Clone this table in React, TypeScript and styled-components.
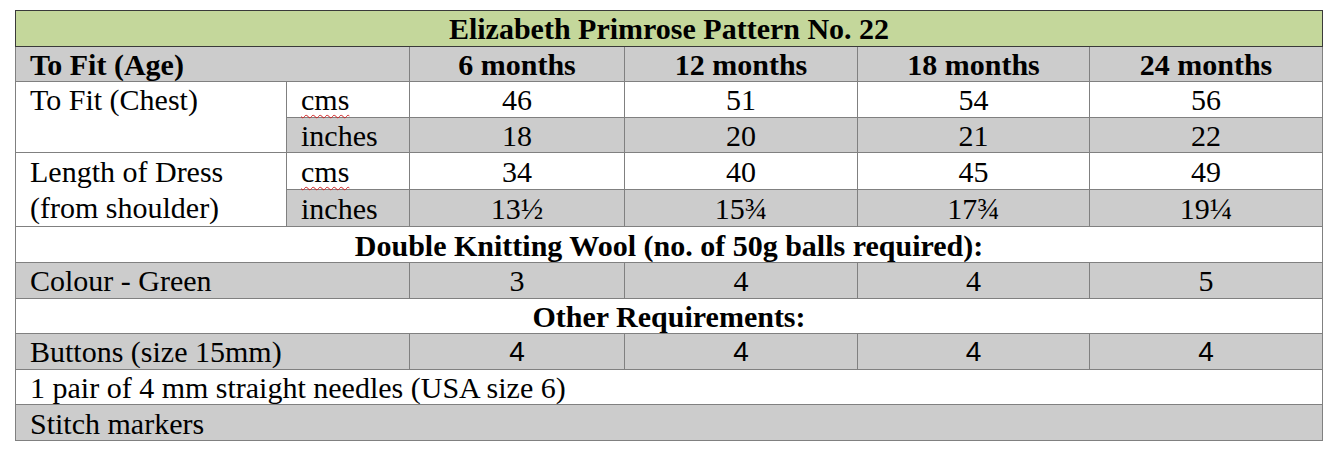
import React from 'react'
import styled, { createGlobalStyle } from 'styled-components'

const serif = "'Liberation Serif', 'Times New Roman', serif"
const sans = "'Liberation Sans', Arial, sans-serif"

const GlobalStyle = createGlobalStyle`
  html, body {
    margin: 0;
    padding: 0;
    background: #ffffff;
  }
  body {
    padding: 10px 0 0 15px;
  }
`

const Table = styled.table`
  width: 1307px;
  table-layout: fixed;
  border-collapse: collapse;
  color: #000;
`

const Row = styled.tr<{ $shade?: 'green' | 'grey' | 'white' }>`
  height: 35.6px;
  background: ${({ $shade }) =>
    $shade === 'green' ? '#c4d79b' : $shade === 'grey' ? '#cccccc' : '#ffffff'};
`

const Cell = styled.td<{ $align?: 'left' | 'center'; $bold?: boolean; $top?: boolean; $sans?: boolean }>`
  border: 1px solid #808080;
  padding: 1px 14px 0 14px;
  line-height: 33px;
  text-align: ${({ $align }) => $align ?? 'center'};
  font-weight: ${({ $bold }) => ($bold ? 700 : 400)};
  vertical-align: ${({ $top }) => ($top ? 'top' : 'middle')};
  white-space: nowrap;
  font-family: ${({ $sans }) => ($sans ? sans : serif)};
  font-size: ${({ $sans }) => ($sans ? '28px' : '30px')};
`

const TitleCell = styled(Cell)`
  border: 1px solid #3a3a3a;
`

const Wrap = styled(Cell)`
  white-space: normal;
  line-height: 36px;
`

const Spelled = styled.span`
  text-decoration: underline wavy #d02020;
  text-decoration-thickness: 1px;
  text-underline-offset: 4px;
`

const widths = [271, 123, 215, 233, 232, 233]
const ages = ['6 months', '12 months', '18 months', '24 months']

const Values: React.FC<{ items: string[]; sans?: boolean }> = ({ items, sans }) => (
  <>
    {items.map((v, i) => (
      <Cell key={i} $sans={sans}>
        {v}
      </Cell>
    ))}
  </>
)

export default function App() {
  return (
    <>
      <GlobalStyle />
      <Table>
        <colgroup>
          {widths.map((w, i) => (
            <col key={i} style={{ width: w }} />
          ))}
        </colgroup>
        <tbody>
          <Row $shade="green">
            <TitleCell colSpan={6} $bold>
              Elizabeth Primrose Pattern No. 22
            </TitleCell>
          </Row>
          <Row $shade="grey">
            <Cell colSpan={2} $align="left" $bold>
              To Fit (Age)
            </Cell>
            {ages.map((a) => (
              <Cell key={a} $bold>
                {a}
              </Cell>
            ))}
          </Row>
          <Row>
            <Cell rowSpan={2} $align="left" $top style={{ background: '#fff' }}>
              To Fit (Chest)
            </Cell>
            <Cell $align="left">
              <Spelled>cms</Spelled>
            </Cell>
            <Values items={['46', '51', '54', '56']} />
          </Row>
          <Row $shade="grey">
            <Cell $align="left">inches</Cell>
            <Values items={['18', '20', '21', '22']} />
          </Row>
          <Row>
            <Wrap rowSpan={2} $align="left" style={{ background: '#fff' }}>
              Length of Dress (from shoulder)
            </Wrap>
            <Cell $align="left">
              <Spelled>cms</Spelled>
            </Cell>
            <Values items={['34', '40', '45', '49']} />
          </Row>
          <Row $shade="grey">
            <Cell $align="left">inches</Cell>
            <Values items={['13½', '15¾', '17¾', '19¼']} />
          </Row>
          <Row>
            <Cell colSpan={6} $bold>
              Double Knitting Wool (no. of 50g balls required):
            </Cell>
          </Row>
          <Row $shade="grey">
            <Cell colSpan={2} $align="left">
              Colour - Green
            </Cell>
            <Values items={['3', '4', '4', '5']} />
          </Row>
          <Row>
            <Cell colSpan={6} $bold>
              Other Requirements:
            </Cell>
          </Row>
          <Row $shade="grey">
            <Cell colSpan={2} $align="left">
              Buttons (size 15mm)
            </Cell>
            <Values items={['4', '4', '4', '4']} sans />
          </Row>
          <Row>
            <Cell colSpan={6} $align="left">
              1 pair of 4 mm straight needles (USA size 6)
            </Cell>
          </Row>
          <Row $shade="grey">
            <Cell colSpan={6} $align="left">
              Stitch markers
            </Cell>
          </Row>
        </tbody>
      </Table>
    </>
  )
}
